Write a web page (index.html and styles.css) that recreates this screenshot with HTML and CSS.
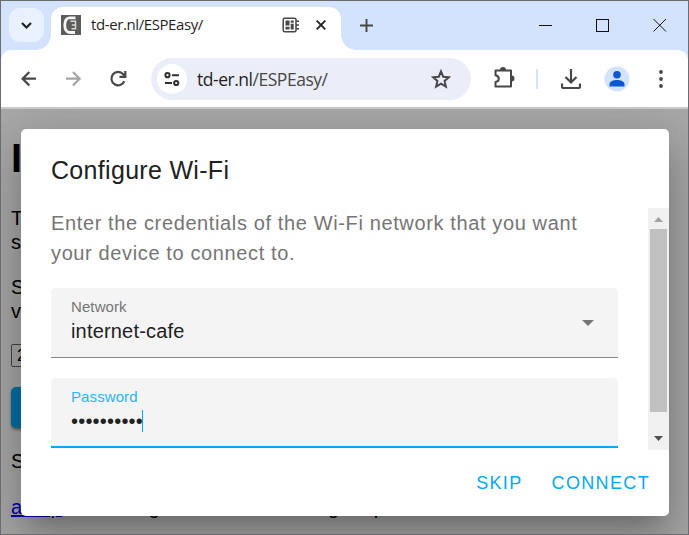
FILE: index.html
```html
<!DOCTYPE html>
<html lang="en">
<head>
<meta charset="utf-8">
<title>td-er.nl/ESPEasy/</title>
<link rel="stylesheet" href="styles.css">
</head>
<body>
<div class="window">
  <header class="tabstrip">
    <div class="tab-search">
      <svg width="35" height="35" viewBox="0 0 35 35" fill="none" stroke="#1f1f1f" stroke-width="2.1"><path d="M13 15l4.500 4.500 4.500-4.500"/></svg>
    </div>
    <div class="tab">
      <svg class="favicon" width="20" height="20" viewBox="0 0 20 20"><path fill="#5d5c5a" d="M0 0h20v20H0z"/><path d="M14.500 2.800H9Q3.800 2.800 3.800 10T9 17.500H14" fill="none" stroke="#f4f4f4" stroke-width="2.800"/><path d="M9.500 6.200H14.500V13.800H10.500M10.800 10h3.700" fill="none" stroke="#d5d5d5" stroke-width="1.500"/></svg>
      <span class="tab-title">td-er.nl/ESPEasy/</span>
      <svg class="serial" width="18" height="16" viewBox="0 0 18 16"><rect x="1.200" y="1.200" width="12.800" height="13.600" rx="1.500" fill="none" stroke="#474747" stroke-width="1.500"/><path fill="#474747" d="M3.500 3.500h4v5h-4zM8.700 3.500h3v2.200h-3zM8.700 6.800h3v5.700h-3zM3.500 9.700h4v2.800h-4zM14 3.500h3v1.400h-3zM14 7.300h3v1.400h-3zM14 11h3v1.400h-3z"/></svg>
      <svg class="tab-close" width="10" height="10" viewBox="0 0 10 10" stroke="#1f1f1f" stroke-width="1.800"><path d="M.7.7l8.600 8.600M9.300.7L.7 9.300"/></svg>
    </div>
    <svg class="new-tab" width="13" height="13" viewBox="0 0 13 13" stroke="#474747" stroke-width="1.900"><path d="M6.500 0v13M0 6.500h13"/></svg>
    <svg class="controls" width="130" height="14" viewBox="0 0 130 14" fill="none" stroke="#111" stroke-width="1"><path d="M0 7.500h13M114.500 1l12.500 12.500M127 1l-12.500 12.500"/><rect x="57.500" y="1.500" width="12" height="12"/></svg>
  </header>
  <div class="toolbar">
    <svg class="nav-icons" width="108" height="20" viewBox="0 0 108 20" fill="none" stroke-width="2.200"><path stroke="#474747" d="M16 9.700H2.500M9.300 3L2.600 9.700 9.300 16.400"/><path stroke="#a6a6a6" d="M46 9.700h13.500M53 3l6.700 6.700-6.700 6.700"/><path stroke="#474747" d="M104.300 12.200A6.700 6.700 0 1 1 103.200 5.200L105 7M105.300 2v5.800h-5.800"/></svg>
    <div class="omnibox">
      <div class="site-info">
        <svg width="18" height="16" viewBox="0 0 18 16" fill="none" stroke="#303030" stroke-width="2"><circle cx="4.500" cy="4.200" r="2.100"/><circle cx="13.200" cy="12" r="2.100"/><path d="M9 4.200h7M2 12h7"/></svg>
      </div>
      <span class="url"><span class="host">td-er.nl</span>/ESPEasy/</span>
      <svg class="star" width="20" height="20" viewBox="0 0 20 20" fill="none" stroke="#474747" stroke-width="2"><path d="M10 2.400l2.200 5.300 5.700.5-4.300 3.700 1.300 5.700-4.900-3-4.900 3 1.300-5.700-4.300-3.700 5.700-.5z"/></svg>
    </div>
    <svg class="puzzle" width="22" height="22" viewBox="0 0 22 22"><path fill="none" stroke="#474747" stroke-width="2" stroke-linejoin="round" d="M2.500 3.500H18V19.500H2.500V15Q5.800 14.500 5.800 11.700T2.500 8.200z"/><path fill="#474747" d="M7 3a3 3 0 0 1 6 0zM18.500 8.500a3 3 0 0 1 0 6z"/></svg>
    <span class="divider"></span>
    <svg class="download" width="20" height="20" viewBox="0 0 20 20" fill="none" stroke="#474747" stroke-width="2.200"><path d="M10 0v13M4.500 8l5.500 5.500L15.500 8M1 14.500V17.500q0 1.500 1.500 1.500h15q1.500 0 1.500-1.500V14.500"/></svg>
    <svg class="avatar" width="26" height="26" viewBox="0 0 26 26"><circle cx="13" cy="13" r="12.500" fill="#d3e3fd"/><circle cx="13" cy="8.800" r="3.800" fill="#0b57d0"/><path fill="#0b57d0" d="M5.500 20.500v-2.300c0-2.800 4-4.200 7.500-4.200s7.500 1.400 7.500 4.200v2.300z"/></svg>
    <svg class="kebab" width="4" height="18" viewBox="0 0 4 18" fill="#474747"><circle cx="2" cy="2" r="1.900"/><circle cx="2" cy="9" r="1.900"/><circle cx="2" cy="16" r="1.900"/></svg>
  </div>
  <main class="page">
    <h1>I</h1>
    <p>T<br>s</p>
    <p>S<br>v</p>
    <div class="select">2</div>
    <div class="install"></div>
    <p>S</p>
    <p class="links"><a>a clip</a><span class="w1">g</span><span class="w2">g</span><span class="w3">p</span></p>
    <section class="dialog">
      <h2>Configure Wi-Fi</h2>
      <div class="content">
        <div class="form">
          <div class="message">Enter the credentials of the Wi-Fi network that you want your device to connect to.</div>
          <div class="field network">
            <div><div class="label">Network</div><div class="value">internet-cafe</div></div>
            <svg width="12" height="6" viewBox="0 0 12 6"><path fill="#757575" d="M0 0h12L6 6z"/></svg>
          </div>
          <div class="field password">
            <div><div class="label">Password</div><div class="dots">••••••••••<i class="caret"></i></div></div>
          </div>
        </div>
        <div class="scrollbar">
          <svg width="9" height="5" viewBox="0 0 9 5"><path fill="#a3a3a3" d="M0 5h9L4.500 0z"/></svg>
          <div class="thumb"></div>
          <svg width="9" height="5" viewBox="0 0 9 5"><path fill="#505050" d="M0 0h9L4.500 5z"/></svg>
        </div>
      </div>
      <footer><span>SKIP</span><span>CONNECT</span></footer>
    </section>
  </main>
</div>
</body>
</html>
```
FILE: styles.css
```css
* { box-sizing: border-box; }
body { margin: 0; overflow: hidden; font-family: "Liberation Sans", Arial, sans-serif; }
svg { display: block; flex: none; }
.window { width: 689px; height: 535px; border: 1px solid #6c6c70; background: #d3e2fd; display: flex; flex-direction: column; }

.tabstrip { height: 49px; display: flex; align-items: flex-start; }
.tab-search { width: 35px; height: 34px; margin: 7px 7px 0 8px; border-radius: 11px; background: #e9f1fe; }
.tab { position: relative; width: 290px; height: 43px; margin-top: 6px; border-radius: 12px 12px 0 0; background: #fff; display: flex; align-items: flex-start; }
.tab::before, .tab::after { content: ""; position: absolute; bottom: 0; width: 15px; height: 15px; }
.tab::before { left: -15px; background: radial-gradient(circle at 0 0, transparent 14.500px, #fff 15px); }
.tab::after { right: -15px; background: radial-gradient(circle at 100% 0, transparent 14.500px, #fff 15px); }
.favicon { margin: 8px 0 0 10px; }
.tab-title { width: 192px; margin: 7px 0 0 10px; font: 15px/20px "Open Sans", sans-serif; letter-spacing: -.4px; color: #1f1f1f; white-space: nowrap; }
.serial { margin: 10px 0 0 -1px; }
.tab-close { margin: 13px 0 0 16px; }
.new-tab { margin: 18px 0 0 19px; }
.controls { margin: 17px 0 0 166px; }

.toolbar { height: 59px; border-radius: 10px 10px 0 0; border-bottom: 2px solid #c8c8c8; background: #fff; display: flex; align-items: center; padding: 0 0 4px 19px; }
.nav-icons { margin-top: 5px; }
.omnibox { width: 320px; height: 42px; margin: 5px 0 0 23px; border-radius: 21px; background: #ebeef8; display: flex; align-items: center; padding-left: 6px; }
.site-info { width: 30px; height: 30px; border-radius: 50%; background: #fff; display: flex; align-items: center; justify-content: center; }
.url { width: 233px; margin-left: 10px; font: 17.500px/24px "Open Sans", sans-serif; letter-spacing: -.47px; color: #474747; white-space: nowrap; }
.host { color: #1f1f1f; }
.star { margin-left: 1px; }
.puzzle { margin: 3px 0 0 22px; }
.divider { width: 2px; height: 20px; margin: 4px 0 0 21px; background: #d3e3fd; }
.download { margin: 4px 0 0 23px; }
.avatar { margin: 4px 0 0 23px; }
.kebab { margin: 4px 0 0 29px; }

.page { position: relative; flex: 1; background: #a8a8a8; padding: 0 10px; overflow: hidden; font-size: 20px; line-height: 23px; color: #000; }
.page h1 { margin: 26px 0 0; font-size: 40px; line-height: 46px; }
.page p { margin: 26px 0 0; line-height: 23.500px; }
.page p + p { margin-top: 22px; }
.select { width: 80px; height: 23px; margin-top: 21px; padding-left: 5px; border: 1px solid #444; border-radius: 2px; font-size: 16.700px; line-height: 21px; }
.install { width: 110px; height: 41px; margin-top: 20px; border-radius: 5px; background: #0072a4; box-shadow: 0 2px 3px #0006; }
.page .install + p { margin-top: 22px; }
.page .links { margin-top: 22px; white-space: nowrap; }
.page a { color: #0000a8; text-decoration: underline; letter-spacing: .8px; }
.w1 { margin-left: 86px; }
.w2 { margin-left: 168px; }
.w3 { margin-left: 35px; }

.dialog { position: absolute; left: 20px; top: 20px; width: 648px; height: 387px; border-radius: 5px; background: #fff; box-shadow: 0 14px 19px -9px #0003, 0 30px 48px 4px #00000024, 0 11px 58px 10px #0000001f; }
.dialog h2 { margin: 0; padding: 26px 30px 0; height: 79px; font-size: 25px; line-height: 30px; font-weight: 400; letter-spacing: .31px; color: #212121; }
.content { height: 242px; display: flex; }
.form { width: 627px; padding: 0 30px; }
.message { height: 80px; font-size: 20px; line-height: 30px; letter-spacing: .625px; color: #757575; }
.field { height: 70px; padding: 9px 24px 0 20px; border-radius: 5px 5px 0 0; background: #f4f4f4; border-bottom: 1px solid #878787; display: flex; justify-content: space-between; }
.field svg { margin-top: 23px; }
.label { font-size: 15px; line-height: 20px; letter-spacing: .1px; color: #757575; }
.value { font-size: 20px; line-height: 28px; letter-spacing: .18px; color: #212121; }
.password { margin-top: 20px; border-bottom: 2px solid #03a9f4; }
.password .label { color: #29b6f6; }
.dots { display: flex; align-items: center; font-size: 20px; line-height: 28px; letter-spacing: .2px; color: #212121; }
.caret { flex: none; width: 1px; height: 22px; margin-left: -1px; background: #03a9f4; }
.scrollbar { width: 21px; background: #f1f1f1; display: flex; flex-direction: column; align-items: center; padding: 9px 0; }
.thumb { width: 17px; height: 183px; margin: 7px 0 24px; background: #c1c1c1; }
footer { height: 66px; padding: 0 19px 0 0; display: flex; justify-content: flex-end; align-items: center; gap: 29px; font-size: 18px; letter-spacing: 1.350px; color: #03a9f4; }
```
